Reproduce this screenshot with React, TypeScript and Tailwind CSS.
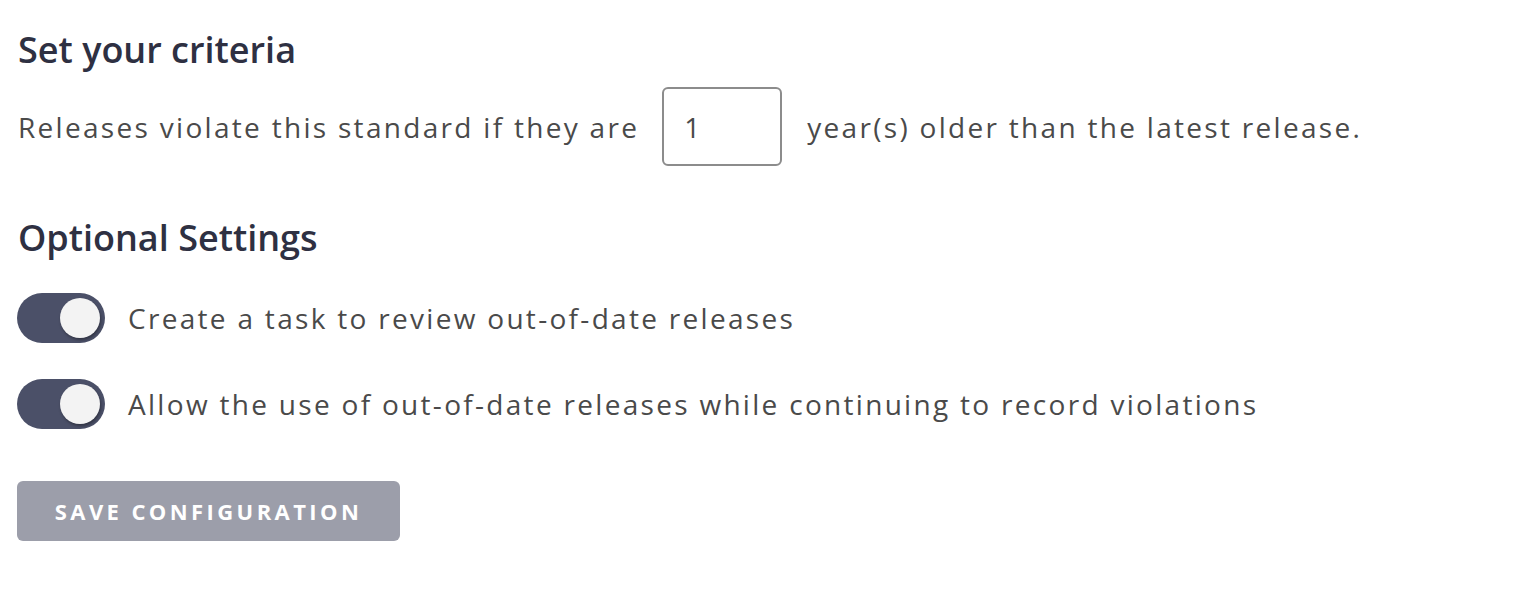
const Toggle = () => (
  <div className="relative h-[50px] w-[88px] shrink-0 rounded-full bg-[#4b5068]">
    <div className="absolute right-[5px] top-[5px] h-[40px] w-[40px] rounded-full bg-[#f3f3f3] shadow-[1px_2px_3px_rgba(0,0,0,0.35)]" />
  </div>
);

const App = () => {
  return (
    <div className="min-h-[592px] bg-white px-[17px] pt-[24px] font-['Open_Sans',sans-serif] text-[#4a4a4a]">
      <h2 className="pl-px text-[36px] font-semibold leading-[52px] text-[#2e3042]">Set your criteria</h2>
      <div className="mt-[11px] flex items-center pl-px text-[28px] tracking-[2.3px]">
        <span>Releases violate this standard if they are</span>
        <input
          type="text"
          defaultValue="1"
          className="ml-[23px] mr-[25px] h-[79px] w-[120px] rounded-[6px] border-2 border-[#8c8c8c] px-[20px] text-[28px] text-[#4a4a4a] outline-none"
        />
        <span>year(s) older than the latest release.</span>
      </div>
      <h2 className="mt-[46px] pl-px text-[36px] font-semibold leading-[52px] text-[#2e3042]">Optional Settings</h2>
      <div className="mt-[29px] flex flex-col gap-[36px]">
        <div className="flex items-center gap-[23px] text-[28px] tracking-[2.3px]">
          <Toggle />
          <span>Create a task to review out-of-date releases</span>
        </div>
        <div className="flex items-center gap-[23px] text-[28px] tracking-[2.3px]">
          <Toggle />
          <span>Allow the use of out-of-date releases while continuing to record violations</span>
        </div>
      </div>
      <button className="mt-[52px] h-[60px] w-[383px] rounded-[6px] bg-[#9c9eaa] text-[22px] font-bold tracking-[0.155em] text-white">
        SAVE CONFIGURATION
      </button>
    </div>
  );
};

export default App;
